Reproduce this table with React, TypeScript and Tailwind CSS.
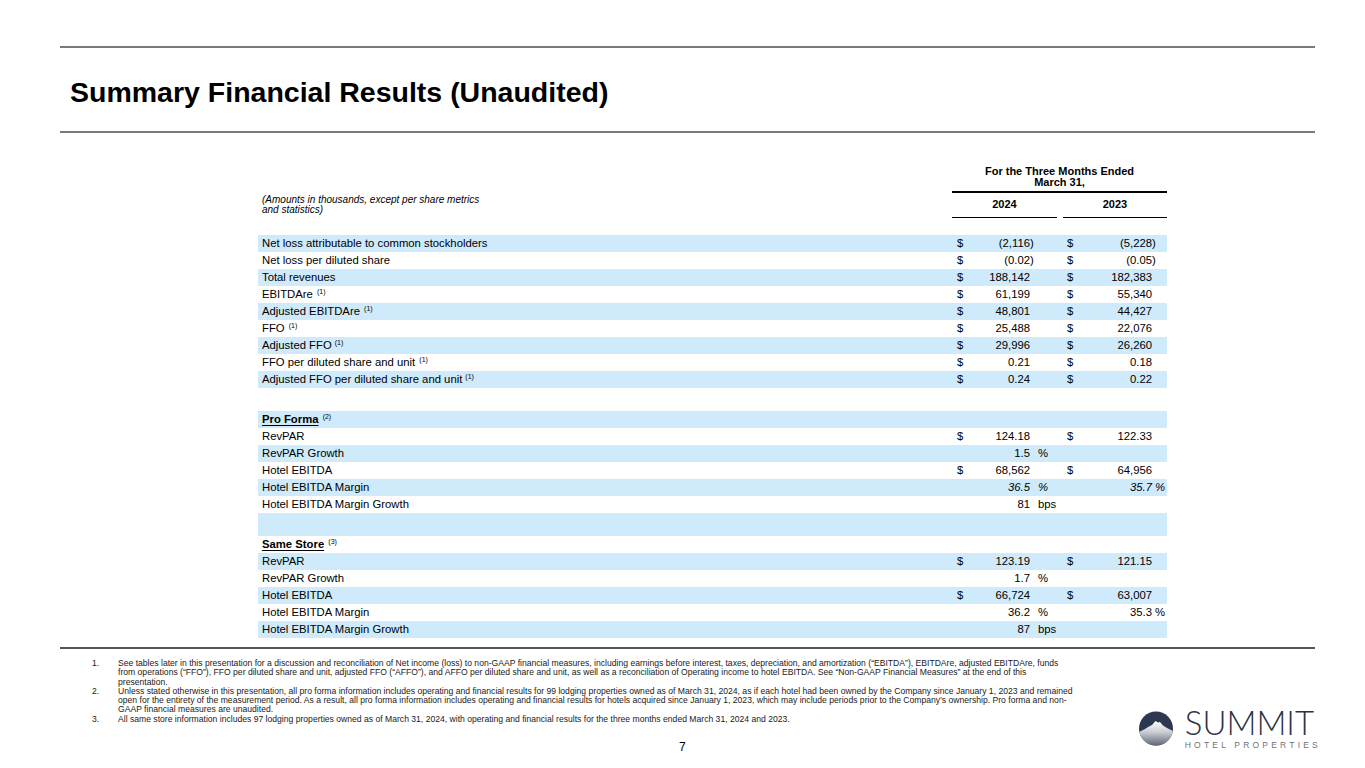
import type { FC, ReactNode } from 'react';

type Val = { d?: boolean; n: string; neg?: boolean; u?: string };
type Row =
  | { kind: 'data'; label: ReactNode; blue: boolean; a?: Val; b?: Val; italic?: boolean }
  | { kind: 'gap'; blue: boolean };

const Sup: FC<{ children: ReactNode }> = ({ children }) => (
  <sup className="text-[7px] ml-[1px] -top-[4px]">{children}</sup>
);

const Heading: FC<{ text: string; note: string }> = ({ text, note }) => (
  <span>
    <span className="font-bold underline underline-offset-[2px]">{text}</span> <Sup>{note}</Sup>
  </span>
);

const rows: Row[] = [
  { kind: 'data', blue: true, label: 'Net loss attributable to common stockholders', a: { d: true, n: '(2,116', neg: true }, b: { d: true, n: '(5,228', neg: true } },
  { kind: 'data', blue: false, label: 'Net loss per diluted share', a: { d: true, n: '(0.02', neg: true }, b: { d: true, n: '(0.05', neg: true } },
  { kind: 'data', blue: true, label: 'Total revenues', a: { d: true, n: '188,142' }, b: { d: true, n: '182,383' } },
  { kind: 'data', blue: false, label: <>EBITDAre <Sup>(1)</Sup></>, a: { d: true, n: '61,199' }, b: { d: true, n: '55,340' } },
  { kind: 'data', blue: true, label: <>Adjusted EBITDAre <Sup>(1)</Sup></>, a: { d: true, n: '48,801' }, b: { d: true, n: '44,427' } },
  { kind: 'data', blue: false, label: <>FFO <Sup>(1)</Sup></>, a: { d: true, n: '25,488' }, b: { d: true, n: '22,076' } },
  { kind: 'data', blue: true, label: <>Adjusted FFO<span className="ml-[2px]" /><Sup>(1)</Sup></>, a: { d: true, n: '29,996' }, b: { d: true, n: '26,260' } },
  { kind: 'data', blue: false, label: <>FFO per diluted share and unit <Sup>(1)</Sup></>, a: { d: true, n: '0.21' }, b: { d: true, n: '0.18' } },
  { kind: 'data', blue: true, label: <>Adjusted FFO per diluted share and unit<span className="ml-[2px]" /><Sup>(1)</Sup></>, a: { d: true, n: '0.24' }, b: { d: true, n: '0.22' } },
  { kind: 'gap', blue: false },
  { kind: 'data', blue: true, label: <Heading text="Pro Forma" note="(2)" /> },
  { kind: 'data', blue: false, label: 'RevPAR', a: { d: true, n: '124.18' }, b: { d: true, n: '122.33' } },
  { kind: 'data', blue: true, label: 'RevPAR Growth', a: { n: '1.5', u: '%' } },
  { kind: 'data', blue: false, label: 'Hotel EBITDA', a: { d: true, n: '68,562' }, b: { d: true, n: '64,956' } },
  { kind: 'data', blue: true, label: 'Hotel EBITDA Margin', a: { n: '36.5', u: '%' }, b: { n: '35.7', u: '%' }, italic: true },
  { kind: 'data', blue: false, label: 'Hotel EBITDA Margin Growth', a: { n: '81', u: 'bps' } },
  { kind: 'gap', blue: true },
  { kind: 'data', blue: false, label: <Heading text="Same Store" note="(3)" /> },
  { kind: 'data', blue: true, label: 'RevPAR', a: { d: true, n: '123.19' }, b: { d: true, n: '121.15' } },
  { kind: 'data', blue: false, label: 'RevPAR Growth', a: { n: '1.7', u: '%' } },
  { kind: 'data', blue: true, label: 'Hotel EBITDA', a: { d: true, n: '66,724' }, b: { d: true, n: '63,007' } },
  { kind: 'data', blue: false, label: 'Hotel EBITDA Margin', a: { n: '36.2', u: '%' }, b: { n: '35.3', u: '%' } },
  { kind: 'data', blue: true, label: 'Hotel EBITDA Margin Growth', a: { n: '87', u: 'bps' } },
];

const notes: { n: string; lines: string[] }[] = [
  {
    n: '1.',
    lines: [
      'See tables later in this presentation for a discussion and reconciliation of Net income (loss) to non-GAAP financial measures, including earnings before interest, taxes, depreciation, and amortization (“EBITDA”), EBITDAre, adjusted EBITDAre, funds',
      'from operations (“FFO”), FFO per diluted share and unit, adjusted FFO (“AFFO”), and AFFO per diluted share and unit, as well as a reconciliation of Operating income to hotel EBITDA. See “Non-GAAP Financial Measures” at the end of this',
      'presentation.',
    ],
  },
  {
    n: '2.',
    lines: [
      'Unless stated otherwise in this presentation, all pro forma information includes operating and financial results for 99 lodging properties owned as of March 31, 2024, as if each hotel had been owned by the Company since January 1, 2023 and remained',
      'open for the entirety of the measurement period. As a result, all pro forma information includes operating and financial results for hotels acquired since January 1, 2023, which may include periods prior to the Company’s ownership. Pro forma and non-',
      'GAAP financial measures are unaudited.',
    ],
  },
  {
    n: '3.',
    lines: [
      'All same store information includes 97 lodging properties owned as of March 31, 2024, with operating and financial results for the three months ended March 31, 2024 and 2023.',
    ],
  },
];

const Logo: FC = () => (
  <div className="flex items-center gap-[12px]">
    <svg width="34" height="35" viewBox="0 0 34 35">
      <defs>
        <clipPath id="lc">
          <circle cx="17" cy="17.5" r="17" />
        </clipPath>
        <linearGradient id="lg" x1="0" y1="0" x2="0" y2="1">
          <stop offset="0" stopColor="#ffffff" />
          <stop offset="0.45" stopColor="#c9ccd3" />
          <stop offset="1" stopColor="#5d6374" />
        </linearGradient>
      </defs>
      <g clipPath="url(#lc)">
        <rect x="0" y="0" width="34" height="35" fill="#2d3750" />
        <path d="M0 21 L6 18 L10 15.5 L13 14 L16.5 10 L19 11.5 L21 11 L24 14.5 L28 17 L34 20 L34 35 L0 35 Z" fill="url(#lg)" />
      </g>
    </svg>
    <div className="flex flex-col">
      <span className="font-['Lato'] font-light text-[33px] leading-[30px] text-[#2a3246]">SUMMIT</span>
      <span className="text-[8.5px] leading-[10px] tracking-[3.2px] text-[#6f7177] mt-[3px] whitespace-nowrap">HOTEL PROPERTIES</span>
    </div>
  </div>
);

const ValA: FC<{ v?: Val; italic?: boolean }> = ({ v, italic }) => (
  <>
    <div className={`w-[78px] flex justify-between pl-[5px] ${italic ? 'italic' : ''}`}>
      <span>{v?.d ? '$' : ''}</span>
      <span>{v?.n ?? ''}</span>
    </div>
    <div className={`w-[27px] ${italic ? 'italic' : ''}`}>
      {v?.neg ? ')' : v?.u ? <span className="pl-[8px]">{v.u}</span> : ''}
    </div>
  </>
);

const ValB: FC<{ v?: Val; italic?: boolean }> = ({ v, italic }) => (
  <>
    <div className={`w-[89px] flex justify-between pl-[4px] ${italic ? 'italic' : ''}`}>
      <span>{v?.d ? '$' : ''}</span>
      <span>{v?.n ?? ''}</span>
    </div>
    <div className={`w-[15px] ${italic ? 'italic' : ''}`}>
      {v?.neg ? ')' : v?.u ? <span className="pl-[3px]">{v.u}</span> : ''}
    </div>
  </>
);

export default function App() {
  return (
    <div className="w-[1365px] h-[768px] bg-white overflow-hidden text-black font-['Liberation_Sans',Arial,sans-serif]">
      <div className="pt-[46px] pl-[60px] pr-[50px]">
        <div className="h-[2px] bg-[#7a7a7a]" />
        <h1 className="mt-[28px] pl-[10px] text-[28.5px] leading-[32px] font-bold">Summary Financial Results (Unaudited)</h1>
        <div className="mt-[23px] h-[2px] bg-[#7a7a7a]" />

        {/* table */}
        <div className="ml-[198px] w-[909px] mt-[33px]">
          <div className="flex items-end">
            <div className="w-[694px] pl-[4px] pb-[3px] italic text-[10px] leading-[10px]">
              (Amounts in thousands, except per share metrics
              <br />
              and statistics)
            </div>
            <div className="w-[215px] flex flex-col">
              <div className="text-center font-bold text-[11px] leading-[11px]">
                For the Three Months Ended
                <br />
                March 31,
              </div>
              <div className="mt-[3px] h-[1.5px] bg-black" />
              <div className="flex justify-between mt-[5px]">
                <div className="w-[105px] flex flex-col">
                  <div className="text-center font-bold text-[11px] leading-[13px]">2024</div>
                  <div className="mt-[6px] h-[1.5px] bg-black" />
                </div>
                <div className="w-[104px] flex flex-col">
                  <div className="text-center font-bold text-[11px] leading-[13px]">2023</div>
                  <div className="mt-[6px] h-[1.5px] bg-black" />
                </div>
              </div>
            </div>
          </div>

          <div className="mt-[16.5px] text-[11.3px]">
            {rows.map((r, i) =>
              r.kind === 'gap' ? (
                <div key={i} className={`h-[23px] ${r.blue ? 'bg-[#cfeafa]' : ''}`} />
              ) : (
                <div key={i} className={`h-[17px] flex items-center leading-[17px] ${r.blue ? 'bg-[#cfeafa]' : ''}`}>
                  <div className="w-[694px] pl-[4px] whitespace-nowrap">{r.label}</div>
                  <ValA v={r.a} italic={r.italic} />
                  <div className="w-[6px]" />
                  <ValB v={r.b} italic={r.italic} />
                </div>
              ),
            )}
          </div>
        </div>
      </div>

      <div className="mt-[9px] ml-[60px] mr-[50px] h-[2.5px] bg-[#555555]" />

      <div className="flex justify-between pl-[60px] pr-[50px]">
        <div className="flex flex-col">
          <div className="mt-[10px] text-[8.6px] leading-[9.3px] text-[#1a1a1a]">
            {notes.map((note) => (
              <div key={note.n} className="flex">
                <div className="w-[58px] pl-[32px]">{note.n}</div>
                <div className="whitespace-nowrap">
                  {note.lines.map((l, j) => (
                    <div key={j}>{l}</div>
                  ))}
                </div>
              </div>
            ))}
          </div>
          <div className="mt-[16px] pl-[619px] text-[12px] leading-[14px]">7</div>
        </div>
        <div className="self-end mb-[4px] -mr-[6px]">
          <Logo />
        </div>
      </div>
    </div>
  );
}
